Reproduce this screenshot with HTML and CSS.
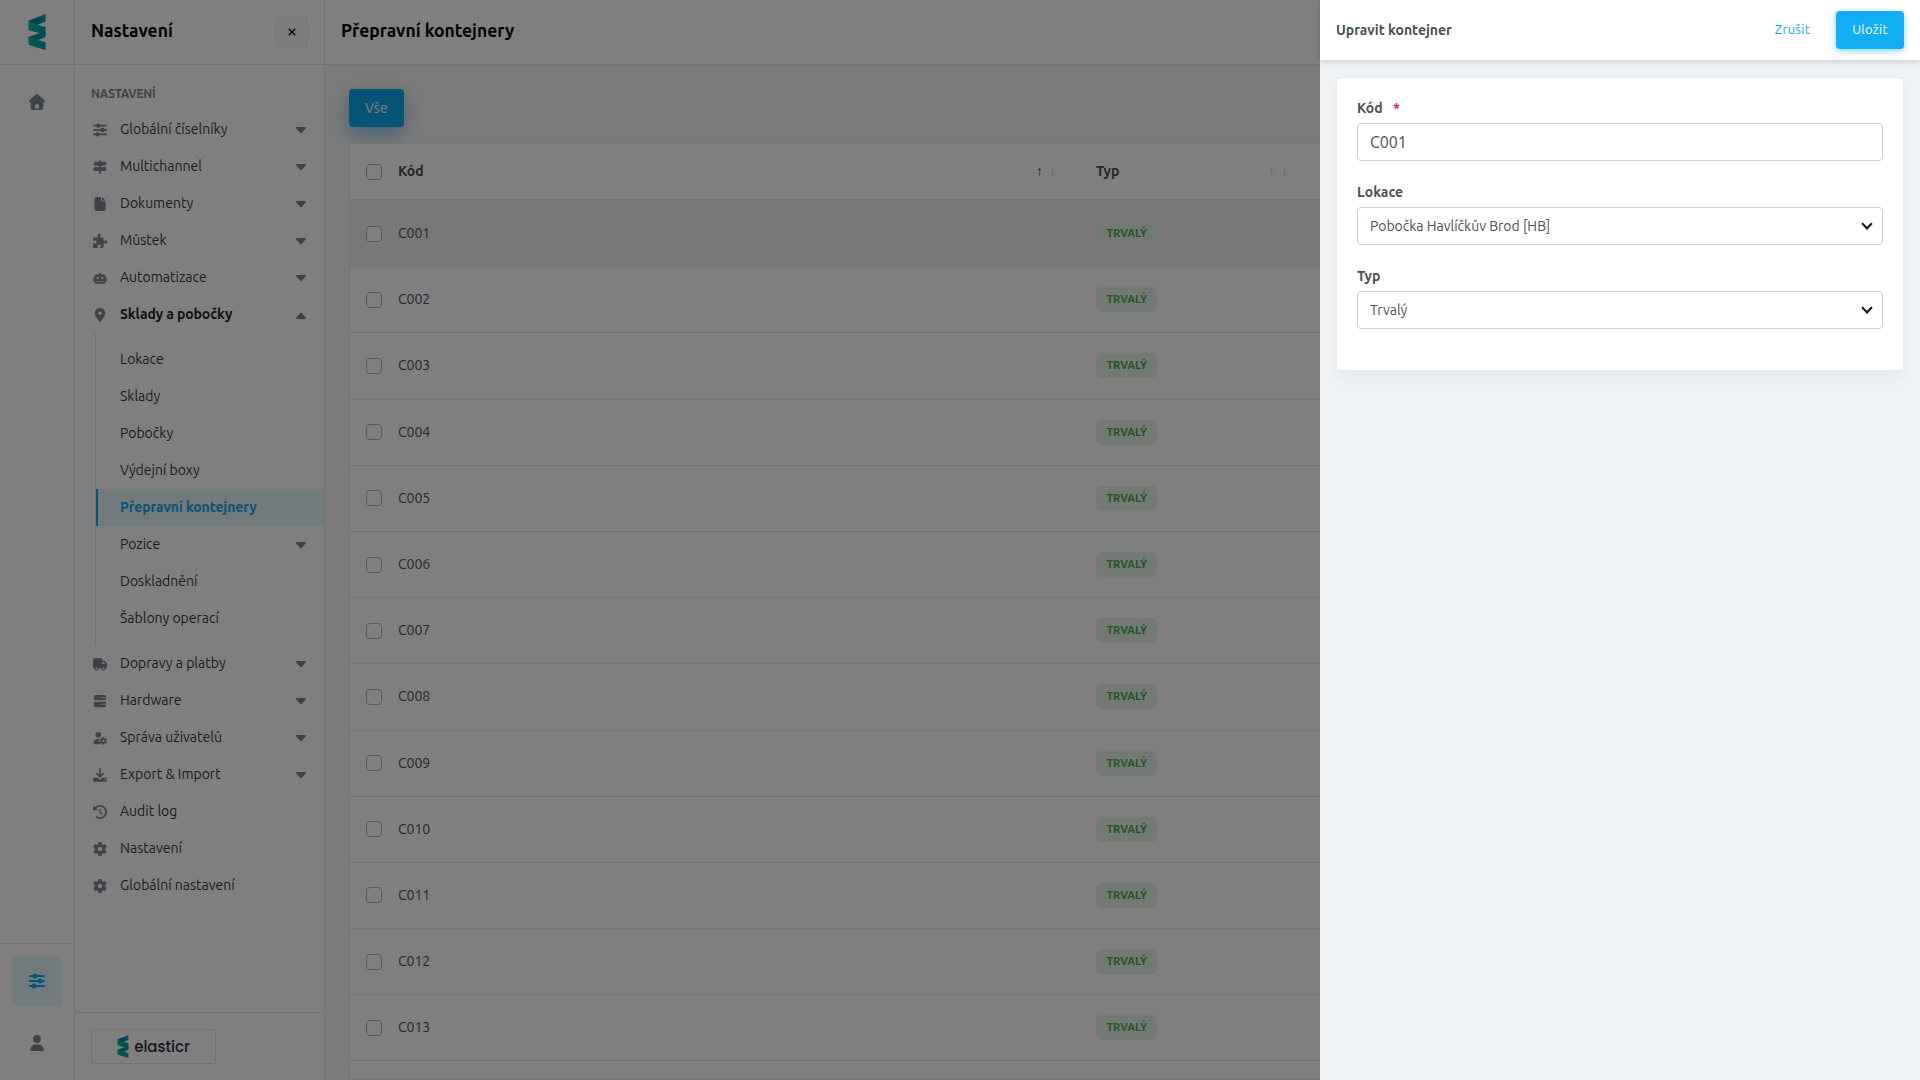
FILE: index.html
```
<!DOCTYPE html>
<html lang="cs">
<head>
    <meta charset="UTF-8">
    <meta name="viewport" content="width=device-width, initial-scale=1.0">
    <title>Přepravní kontejnery</title>
    <link rel="stylesheet" href="styles.css">
</head>
<body>
    <!-- Icon sprite -->
    <svg class="sprite" xmlns="http://www.w3.org/2000/svg">
        <defs>
            <linearGradient id="logo-light" x1="0" y1="0" x2="1" y2="1">
                <stop offset="0" stop-color="#04c795"/>
                <stop offset="1" stop-color="#0892a8"/>
            </linearGradient>
            <linearGradient id="logo-dark" x1="1" y1="0" x2="0" y2="1">
                <stop offset="0" stop-color="#0bacc8"/>
                <stop offset="1" stop-color="#066a8a"/>
            </linearGradient>
        </defs>
        <symbol id="logo" viewBox="0 0 18 36">
            <path fill="url(#logo-dark)" d="M17.500 0v7.600L7 12 .5 8V6.700z"/>
            <path fill="url(#logo-dark)" d="M17.500 17v6L7 27.500.5 25v-2z"/>
            <path fill="url(#logo-light)" d="M.5 6.700l6.500 3.600 10.500 2.700v8L.5 16z"/>
            <path fill="url(#logo-light)" d="M.5 23.300l17 5V36L.5 31z"/>
        </symbol>
        <symbol id="i-home" viewBox="0 0 16 16">
            <path fill-rule="evenodd" d="M8 0c.4 0 .7.1 1 .4l6.600 5.800c.7.700.3 1.800-.6 1.800h-.7v6c0 1.200-.8 2-2 2H3.700c-1.200 0-2-.8-2-2V8H1C.1 8-.3 6.900.4 6.200L7 .4c.3-.3.6-.4 1-.4zM6 14.500h4V12c0-1.100-.9-2-2-2s-2 .9-2 2z"/>
        </symbol>
        <symbol id="i-sliders" viewBox="0 0 16 16">
            <path d="M1 2h14a1 1 0 0 1 0 2H1a1 1 0 0 1 0-2zM1 7h14a1 1 0 0 1 0 2H1a1 1 0 0 1 0-2zM1 12h14a1 1 0 0 1 0 2H1a1 1 0 0 1 0-2z"/>
            <circle cx="6" cy="3" r="2.500"/><circle cx="11" cy="8" r="2.500"/><circle cx="5" cy="13" r="2.500"/>
        </symbol>
        <symbol id="i-signs" viewBox="0 0 16 16">
            <path d="M7 1a1 1 0 0 1 2 0v1h4.600l2.100 1.700c.4.300.4.800 0 1.100L13.600 6.500H9V8h5.200c.5 0 .8.300.8.800v3c0 .5-.3.700-.8.700H9V15a1 1 0 0 1-2 0v-2.500H2.400L.3 10.800c-.4-.3-.4-.8 0-1.100L2.400 8H7V6.500H1.800c-.5 0-.8-.3-.8-.8v-3c0-.5.3-.7.8-.7H7z"/>
        </symbol>
        <symbol id="i-file" viewBox="0 0 16 16">
            <path d="M4 0h5v4c0 .6.400 1 1 1h4.500v9c0 1.200-.8 2-2 2H4c-1.300 0-2.300-.8-2.300-2V2C1.700.8 2.700 0 4 0zM10.200 0l4.300 4h-4.300z"/>
        </symbol>
        <symbol id="i-puzzle" viewBox="0 0 512 512">
            <path d="M192 104.800c0-9.200-5.800-17.300-13.200-22.800C167.200 73.300 160 61.300 160 48c0-26.500 28.700-48 64-48s64 21.500 64 48c0 13.300-7.200 25.300-18.800 34c-7.400 5.500-13.200 13.600-13.200 22.800c0 12.800 10.400 23.200 23.200 23.200l56.800 0c26.500 0 48 21.500 48 48l0 56.800c0 12.800 10.400 23.200 23.200 23.200c9.200 0 17.300-5.800 22.800-13.200c8.700-11.600 20.700-18.800 34-18.800c26.500 0 48 28.700 48 64s-21.500 64-48 64c-13.300 0-25.300-7.200-34-18.800c-5.500-7.400-13.600-13.200-22.800-13.200c-12.800 0-23.200 10.400-23.200 23.200L384 464c0 26.500-21.500 48-48 48l-56.800 0c-12.800 0-23.200-10.400-23.200-23.200c0-9.200 5.800-17.300 13.200-22.800c11.600-8.700 18.800-20.700 18.800-34c0-26.500-28.700-48-64-48s-64 21.500-64 48c0 13.300 7.200 25.300 18.800 34c7.400 5.500 13.200 13.600 13.200 22.800c0 12.800-10.400 23.200-23.200 23.200L48 512c-26.500 0-48-21.500-48-48L0 343.200C0 330.400 10.400 320 23.200 320c9.200 0 17.300 5.800 22.800 13.200C54.700 344.800 66.700 352 80 352c26.500 0 48-28.700 48-64s-21.500-64-48-64c-13.300 0-25.300 7.200-34 18.800C40.500 250.200 32.400 256 23.200 256C10.400 256 0 245.600 0 232.800L0 176c0-26.500 21.500-48 48-48l120.800 0c12.800 0 23.200-10.400 23.200-23.200z"/>
        </symbol>
        <symbol id="i-robot" viewBox="0 0 16 16">
            <path fill-rule="evenodd" d="M8 1.500c.5 0 .8.300.8.800V4h3.400c1.200 0 2.200 1 2.200 2v6.500c0 1-1 2-2.200 2H3.800c-1.200 0-2.200-1-2.200-2V6c0-1 1-2 2.200-2h3.400V2.300c0-.5.300-.8.800-.8zM5.500 6.700a1.300 1.300 0 1 0 0 2.600 1.300 1.300 0 0 0 0-2.600zm5 0a1.300 1.300 0 1 0 0 2.600 1.300 1.300 0 0 0 0-2.600zM4.300 11.500v1h1.500v-1zm2.900 0v1h1.600v-1zm3 0v1h1.500v-1z"/>
            <path d="M0 7.500h1V12H0zM15 7.500h1V12h-1z"/>
        </symbol>
        <symbol id="i-pin" viewBox="-64 0 512 512">
            <path d="M215.700 499.200C267 435 384 279.400 384 192C384 86 298 0 192 0S0 86 0 192c0 87.400 117 243 168.300 307.200c12.300 15.300 35.100 15.300 47.400 0zM192 128a64 64 0 1 1 0 128 64 64 0 1 1 0-128z"/>
        </symbol>
        <symbol id="i-truck" viewBox="0 0 16 16">
            <path fill-rule="evenodd" d="M1.500 1.500h7.500c.8 0 1.500.7 1.500 1.500v1h1.700c.4 0 .8.200 1.100.500l2.200 2.300c.3.300.5.700.5 1.100V12c0 .6-.4 1-1 1h-.6a2.400 2.400 0 0 1-4.800 0H6.400a2.400 2.400 0 0 1-4.800 0h-.1C.7 13 0 12.300 0 11.500V3c0-.8.7-1.500 1.500-1.500zM10.500 5.500V8H14L11.900 5.500zM4 11.900a1.100 1.100 0 1 0 0 2.200 1.100 1.100 0 0 0 0-2.200zm8 0a1.100 1.100 0 1 0 0 2.200 1.100 1.100 0 0 0 0-2.200z"/>
        </symbol>
        <symbol id="i-server" viewBox="0 0 16 16">
            <path fill-rule="evenodd" d="M3 1h10c1.100 0 2 .9 2 2v2.200c0 1.100-.9 2-2 2H3c-1.100 0-2-.9-2-2V3c0-1.100.9-2 2-2zm6.700 2.400v1.500h1.500V3.400zm2.400 0v1.500h1.500V3.400zM3 8.800h10c1.100 0 2 .9 2 2V13c0 1.100-.9 2-2 2H3c-1.100 0-2-.9-2-2v-2.200c0-1.100.9-2 2-2zm6.700 2.400v1.500h1.500v-1.500zm2.400 0v1.500h1.500v-1.500z"/>
        </symbol>
        <symbol id="i-usergear" viewBox="0 0 16 16">
            <circle cx="6" cy="4.200" r="3.200"/>
            <path d="M5 9h2.500c-.6 1.300-.6 3.500 0 4.500.3.600.7 1.100 1.200 1.500H1.500c-.5 0-.8-.3-.8-.8C.7 11.300 2.500 9 5 9z"/>
            <path fill-rule="evenodd" d="M11 6.900h1.700l.3 1.300 1 .5 1.200-.4.800 1.500-.9.900v1.200l.9.900-.8 1.500-1.200-.4-1 .5-.3 1.300H11l-.3-1.300-1-.5-1.200.4-.8-1.500.9-.9v-1.200l-.9-.9.8-1.500 1.200.4 1-.5zM11.900 10a1.300 1.300 0 1 0 0 2.600 1.300 1.300 0 0 0 0-2.600z"/>
        </symbol>
        <symbol id="i-download" viewBox="0 0 16 16">
            <path d="M8 0c.6 0 1 .4 1 1v6.800l2-2c.9-.9 2.300.5 1.400 1.400L8.700 10.800c-.4.400-1 .4-1.400 0L3.600 7.200c-.9-.9.5-2.300 1.400-1.400l2 2V1c0-.6.4-1 1-1z"/>
            <path fill-rule="evenodd" d="M2 10.800h2.800l1.500 1.400c1 .9 2.400.9 3.400 0l1.500-1.400H14c1 0 1.600.7 1.600 1.600v1.800c0 1-.6 1.600-1.600 1.600H2c-1 0-1.600-.7-1.600-1.600v-1.800c0-1 .6-1.600 1.600-1.600zm11.300 1.900v1.200h1.200v-1.200z"/>
        </symbol>
        <symbol id="i-history" viewBox="0 0 512 512">
            <path d="M75 75L41 41C25.900 25.900 0 36.600 0 57.900V168c0 13.300 10.700 24 24 24H134.100c21.400 0 32.100-25.900 17-41l-30.800-30.800C155 85.500 203 64 256 64c106 0 192 86 192 192s-86 192-192 192c-40.800 0-78.600-12.700-109.700-34.400c-14.500-10.100-34.400-6.600-44.600 7.900s-6.600 34.400 7.900 44.600C151.200 495 201.700 512 256 512c141.400 0 256-114.600 256-256S397.400 0 256 0C185.300 0 121.300 28.700 75 75zm181 53c-13.300 0-24 10.700-24 24V256c0 6.400 2.500 12.500 7 17l72 72c9.400 9.400 24.600 9.400 33.900 0s9.400-24.600 0-33.900l-65-65V152c0-13.300-10.700-24-24-24z"/>
        </symbol>
        <symbol id="i-gear" viewBox="0 0 512 512">
            <path d="M495.900 166.600c3.200 8.700 .5 18.400-6.400 24.600l-43.300 39.400c1.100 8.300 1.700 16.800 1.700 25.400s-.6 17.100-1.700 25.400l43.300 39.400c6.900 6.200 9.600 15.900 6.400 24.600c-4.400 11.900-9.700 23.300-15.800 34.300l-4.700 8.100c-6.600 11-14 21.400-22.100 31.200c-5.900 7.200-15.700 9.600-24.500 6.800l-55.700-17.700c-13.400 10.300-28.200 18.900-44 25.400l-12.500 57.100c-2 9.100-9 16.300-18.200 17.800c-13.800 2.300-28 3.500-42.500 3.500s-28.700-1.200-42.500-3.500c-9.200-1.500-16.200-8.700-18.200-17.800l-12.500-57.100c-15.800-6.500-30.600-15.100-44-25.400L83.100 425.900c-8.800 2.800-18.600 .3-24.500-6.800c-8.100-9.800-15.500-20.200-22.100-31.200l-4.700-8.100c-6.100-11-11.400-22.400-15.800-34.300c-3.200-8.700-.5-18.400 6.400-24.600l43.300-39.400C64.600 273.100 64 264.600 64 256s.6-17.100 1.700-25.400L22.400 191.200c-6.900-6.200-9.600-15.900-6.400-24.600c4.400-11.900 9.700-23.300 15.800-34.300l4.700-8.100c6.600-11 14-21.400 22.100-31.200c5.900-7.200 15.700-9.600 24.500-6.800l55.700 17.700c13.400-10.300 28.200-18.900 44-25.400l12.500-57.100c2-9.100 9-16.300 18.200-17.800C227.300 1.200 241.500 0 256 0s28.700 1.200 42.500 3.500c9.200 1.500 16.200 8.700 18.200 17.800l12.500 57.100c15.800 6.500 30.600 15.100 44 25.400l55.700-17.700c8.800-2.800 18.600-.3 24.500 6.800c8.100 9.800 15.500 20.200 22.100 31.200l4.700 8.100c6.100 11 11.400 22.400 15.800 34.300zM256 336a80 80 0 1 0 0-160 80 80 0 1 0 0 160z"/>
        </symbol>
        <symbol id="i-user" viewBox="0 0 16 16">
            <circle cx="8" cy="4" r="4"/>
            <path d="M6.500 9.500h3c2.900 0 5.200 2.300 5.200 5.200 0 .8-.4 1.300-1 1.300H2.300c-.6 0-1-.5-1-1.300 0-2.900 2.300-5.200 5.200-5.200z"/>
        </symbol>
        <symbol id="i-caret" viewBox="0 0 10 7">
            <path d="M1 0h8c.9 0 1.300 1 .7 1.600L5.700 5.900c-.4.400-1 .4-1.400 0L.3 1.600C-.3 1 .1 0 1 0z"/>
        </symbol>
    </svg>

    <div class="app">
        <aside class="rail">
            <div class="rail-logo"><svg class="logo"><use href="#logo"/></svg></div>
            <a class="rail-link"><svg><use href="#i-home"/></svg></a>
            <div class="rail-bottom">
                <a class="rail-link active"><svg><use href="#i-sliders"/></svg></a>
                <a class="rail-link"><svg><use href="#i-user"/></svg></a>
            </div>
        </aside>

        <nav class="sidebar">
            <div class="sidebar-header">
                <h2>Nastavení</h2>
                <button class="close">
                    <svg viewBox="0 0 8 8"><path d="M.7.7l6.600 6.600M7.300.7L.7 7.300"/></svg>
                </button>
            </div>
            <div class="menu">
                <div class="menu-title">Nastavení</div>
                <a class="item"><svg class="icon"><use href="#i-sliders"/></svg>Globální číselníky<svg class="caret"><use href="#i-caret"/></svg></a>
                <a class="item"><svg class="icon"><use href="#i-signs"/></svg>Multichannel<svg class="caret"><use href="#i-caret"/></svg></a>
                <a class="item"><svg class="icon"><use href="#i-file"/></svg>Dokumenty<svg class="caret"><use href="#i-caret"/></svg></a>
                <a class="item"><svg class="icon"><use href="#i-puzzle"/></svg>Můstek<svg class="caret"><use href="#i-caret"/></svg></a>
                <a class="item"><svg class="icon"><use href="#i-robot"/></svg>Automatizace<svg class="caret"><use href="#i-caret"/></svg></a>
                <a class="item open"><svg class="icon"><use href="#i-pin"/></svg>Sklady a pobočky<svg class="caret"><use href="#i-caret"/></svg></a>
                <div class="submenu">
                    <a class="item">Lokace</a>
                    <a class="item">Sklady</a>
                    <a class="item">Pobočky</a>
                    <a class="item">Výdejní boxy</a>
                    <a class="item active">Přepravní kontejnery</a>
                    <a class="item">Pozice<svg class="caret"><use href="#i-caret"/></svg></a>
                    <a class="item">Doskladnění</a>
                    <a class="item">Šablony operací</a>
                </div>
                <a class="item"><svg class="icon"><use href="#i-truck"/></svg>Dopravy a platby<svg class="caret"><use href="#i-caret"/></svg></a>
                <a class="item"><svg class="icon"><use href="#i-server"/></svg>Hardware<svg class="caret"><use href="#i-caret"/></svg></a>
                <a class="item"><svg class="icon"><use href="#i-usergear"/></svg>Správa uživatelů<svg class="caret"><use href="#i-caret"/></svg></a>
                <a class="item"><svg class="icon"><use href="#i-download"/></svg>Export &amp; Import<svg class="caret"><use href="#i-caret"/></svg></a>
                <a class="item"><svg class="icon"><use href="#i-history"/></svg>Audit log</a>
                <a class="item"><svg class="icon"><use href="#i-gear"/></svg>Nastavení</a>
                <a class="item"><svg class="icon"><use href="#i-gear"/></svg>Globální nastavení</a>
            </div>
            <div class="sidebar-footer">
                <div class="brand"><svg class="logo"><use href="#logo"/></svg>elasticr</div>
            </div>
        </nav>

        <main class="main">
            <header class="topbar"><h1>Přepravní kontejnery</h1></header>
            <div class="content">
                <button class="btn btn-filter">Vše</button>
                <div class="table-wrap">
                    <table class="table">
                        <thead>
                            <tr>
                                <th class="check"><span class="checkbox"></span></th>
                                <th class="code">Kód<span class="sort asc"><i>↑</i><i>↓</i></span></th>
                                <th class="type">Typ<span class="sort"><i>↑</i><i>↓</i></span></th>
                                <th></th>
                            </tr>
                        </thead>
                        <tbody id="rows"></tbody>
                    </table>
                </div>
            </div>
        </main>
    </div>

    <div class="overlay"></div>

    <section class="drawer">
        <header class="drawer-header">
            <h3>Upravit kontejner</h3>
            <button class="btn btn-link">Zrušit</button>
            <button class="btn btn-save">Uložit</button>
        </header>
        <form class="card">
            <label for="code">Kód <span class="required">*</span></label>
            <input type="text" id="code" value="C001">
            <label for="location">Lokace</label>
            <div class="select">
                <select id="location"><option>Pobočka Havlíčkův Brod [HB]</option></select>
            </div>
            <label for="type">Typ</label>
            <div class="select">
                <select id="type"><option>Trvalý</option></select>
            </div>
        </form>
    </section>

    <script>
        const rows = document.getElementById("rows");

        for (let i = 1; i <= 13; i++) {
            const code = "C" + String(i).padStart(3, "0");
            rows.innerHTML += `<tr>
                <td class="check"><span class="checkbox"></span></td>
                <td>${code}</td>
                <td><span class="badge">Trvalý</span></td>
                <td></td>
            </tr>`;
        }
        rows.rows[0].classList.add("selected");
    </script>
</body>
</html>
```

FILE: styles.css
```
* {
    box-sizing: border-box;
}

body {
    margin: 0;
    font-family: Ubuntu, "Noto Sans", sans-serif;
    font-size: 14px;
    line-height: 21px;
    color: #495057;
    overflow: hidden;
}

h1, h2, h3 {
    margin: 0;
    font-weight: 600;
}

button, input, select {
    font-family: inherit;
}

.sprite {
    position: absolute;
    width: 0;
    height: 0;
}

.app {
    display: flex;
    height: 1080px;
    overflow: hidden;
    background: #fff;
}

/* Left rail */
.rail {
    display: flex;
    flex-direction: column;
    align-items: center;
    width: 75px;
    border-right: 1px solid #e2e5e8;
}

.rail-logo {
    display: flex;
    justify-content: center;
    align-items: center;
    width: 100%;
    height: 65px;
    border-bottom: 1px solid #e2e5e8;
    margin-bottom: 12px;
}

.rail-logo .logo {
    width: 18px;
    height: 36px;
}

.rail-link {
    display: flex;
    justify-content: center;
    align-items: center;
    width: 50px;
    height: 50px;
    border-radius: 4px;
    color: #7b8690;
}

.rail-link svg {
    width: 16px;
    height: 16px;
    fill: currentColor;
}

.rail-link.active {
    background: #e3f4fb;
    color: #11a9f3;
}

.rail-bottom {
    display: flex;
    flex-direction: column;
    align-items: center;
    gap: 12px;
    width: 100%;
    margin-top: auto;
    padding: 12px 0;
    border-top: 1px solid #e2e5e8;
}

/* Sidebar */
.sidebar {
    display: flex;
    flex-direction: column;
    width: 250px;
    border-right: 1px solid #e2e5e8;
}

.sidebar-header {
    display: flex;
    justify-content: space-between;
    align-items: center;
    height: 65px;
    padding: 0 16px;
    border-bottom: 1px solid #e2e5e8;
    color: #000;
}

.sidebar-header h2 {
    font-size: 17.5px;
    padding-bottom: 3px;
}

.close {
    display: flex;
    justify-content: center;
    align-items: center;
    width: 32px;
    height: 32px;
    padding: 0;
    background: #f8f8f8;
    border: 1px solid #e9ebed;
    border-radius: 4px;
}

.close svg {
    width: 8px;
    height: 8px;
    stroke: #000;
    stroke-width: 1.3;
}

.menu {
    flex: 1;
    padding-top: 18px;
}

.menu-title {
    padding: 0 16px;
    margin-bottom: 7px;
    font-size: 12px;
    font-weight: 600;
    letter-spacing: -.2px;
    text-transform: uppercase;
    color: #7b8690;
}

.item {
    display: flex;
    align-items: center;
    height: 37px;
    padding: 0 18px;
    color: #343a40;
}

.icon {
    width: 14px;
    height: 14px;
    margin: 1px 13px 0 0;
    fill: #7b8690;
}

.caret {
    width: 10px;
    height: 7px;
    margin: 2px 0 0 auto;
    fill: #7b8690;
}

.item.open {
    font-weight: 600;
    letter-spacing: -.1px;
    color: #212529;
}

.item.open .caret {
    transform: rotate(180deg);
}

.submenu {
    margin-left: 20px;
    padding: 8px 0;
    border-left: 1px solid #dee2e6;
}

.submenu .item {
    padding-left: 24px;
}

.submenu .item.active {
    border-left: 2px solid #11a9f3;
    padding-left: 22px;
    background: #e3f4fb;
    font-weight: 600;
    letter-spacing: -.1px;
    color: #11a9f3;
}

.sidebar-footer {
    height: 68px;
    padding: 16px;
    border-top: 1px solid #e2e5e8;
}

.brand {
    display: flex;
    justify-content: center;
    align-items: center;
    gap: 5px;
    width: 125px;
    height: 35px;
    border: 1px solid #dee2e6;
    border-radius: 2px;
    font: 500 15px Poppins, Inter, sans-serif;
    color: #2c3342;
}

.brand .logo {
    width: 12px;
    height: 23px;
}

/* Main */
.main {
    flex: 1;
    background: #f4f5f5;
}

.topbar {
    height: 65px;
    padding: 20px 16px;
    background: #fff;
    border-bottom: 1px solid #e2e5e8;
    color: #000;
}

.topbar h1 {
    font-size: 17.5px;
}

.content {
    padding: 24px;
}

.btn {
    height: 38px;
    padding: 0 16px;
    border: 0;
    border-radius: 4px;
    font-size: 14px;
}

.btn-filter {
    display: block;
    margin-bottom: 16px;
    background: #11a9f3;
    box-shadow: 0 8px 16px rgba(17, 169, 243, .35), 0 4px 24px rgba(0, 0, 0, .12);
    color: #fff;
}

.table-wrap {
    height: 937px;
    background: #fff;
    border: 1px solid #e6e9ec;
    border-radius: 3px;
}

.table {
    width: 100%;
    table-layout: fixed;
    border-collapse: separate;
    border-spacing: 0;
}

.table th {
    height: 57px;
    padding: 0 16px;
    border-bottom: 2px solid #e9ecef;
    font-weight: 600;
    text-align: left;
}

.table td {
    height: 66.190px;
    padding: 0 16px;
    border-bottom: 1px solid #e6e9ec;
}

.table th.check,
.table td.check {
    width: 32px;
    padding-right: 0;
}

.table .code {
    width: 698px;
    padding-right: 24px;
}

.table .type {
    width: 232px;
    padding-right: 24px;
}

.selected td {
    background: #f0f0f0;
}

.checkbox {
    display: block;
    width: 16px;
    height: 16px;
    background: #fff;
    border: 1px solid #a9afb6;
    border-radius: 4px;
}

.sort {
    float: right;
    display: flex;
    gap: 6px;
    font-size: 14px;
    font-weight: 400;
}

.sort i {
    font-style: normal;
    opacity: .3;
}

.sort.asc i:first-child {
    opacity: 1;
}

.badge {
    display: inline-block;
    padding: 0 10.500px;
    background: #e6f4e7;
    border-radius: 5px;
    font-size: 11px;
    font-weight: 700;
    line-height: 25px;
    text-transform: uppercase;
    color: #43a948;
}

/* Edit drawer */
.overlay {
    position: fixed;
    inset: 0;
    background: rgba(0, 0, 0, .5);
}

.drawer {
    position: fixed;
    top: 0;
    right: 0;
    bottom: 0;
    width: 600px;
    background: #eff3f6;
}

.drawer-header {
    display: flex;
    align-items: center;
    height: 60px;
    padding: 0 16px;
    background: #fff;
    box-shadow: 0 1px 6px rgba(0, 0, 0, .2);
}

.drawer-header h3 {
    margin-right: auto;
    font-size: 14px;
}

.drawer .btn {
    font-size: 13px;
    letter-spacing: .3px;
    padding-bottom: 2px;
}

.btn-link {
    background: none;
    color: #11a9f3;
    margin-right: 10px;
}

.btn-save {
    background: #11adf5;
    box-shadow: 0 2px 6px rgba(17, 169, 243, .5);
    color: #fff;
}

.card {
    height: 294px;
    margin: 17px 16px;
    padding: 20px;
    background: #fff;
    border: 1px solid #e6e9ec;
    border-radius: 3px;
    box-shadow: 0 8px 16px rgba(0, 0, 0, .04);
}

.card label {
    display: block;
    height: 25px;
    font-weight: 600;
}

.required {
    margin-left: 7px;
    color: #dc2f55;
}

.card input,
.card select {
    display: block;
    width: 100%;
    height: 38px;
    margin-bottom: 21px;
    padding: 0 12px;
    background: #fff;
    border: 1px solid #ced4da;
    border-radius: 4px;
    color: #495057;
    font-size: 16px;
}

.card select {
    appearance: none;
    font-size: 14px;
}

.select {
    position: relative;
}

/* chevron over the select */
.select::after {
    content: "";
    position: absolute;
    top: 13px;
    right: 12px;
    width: 6px;
    height: 6px;
    border: solid #111;
    border-width: 0 2px 2px 0;
    transform: rotate(45deg);
}
```
